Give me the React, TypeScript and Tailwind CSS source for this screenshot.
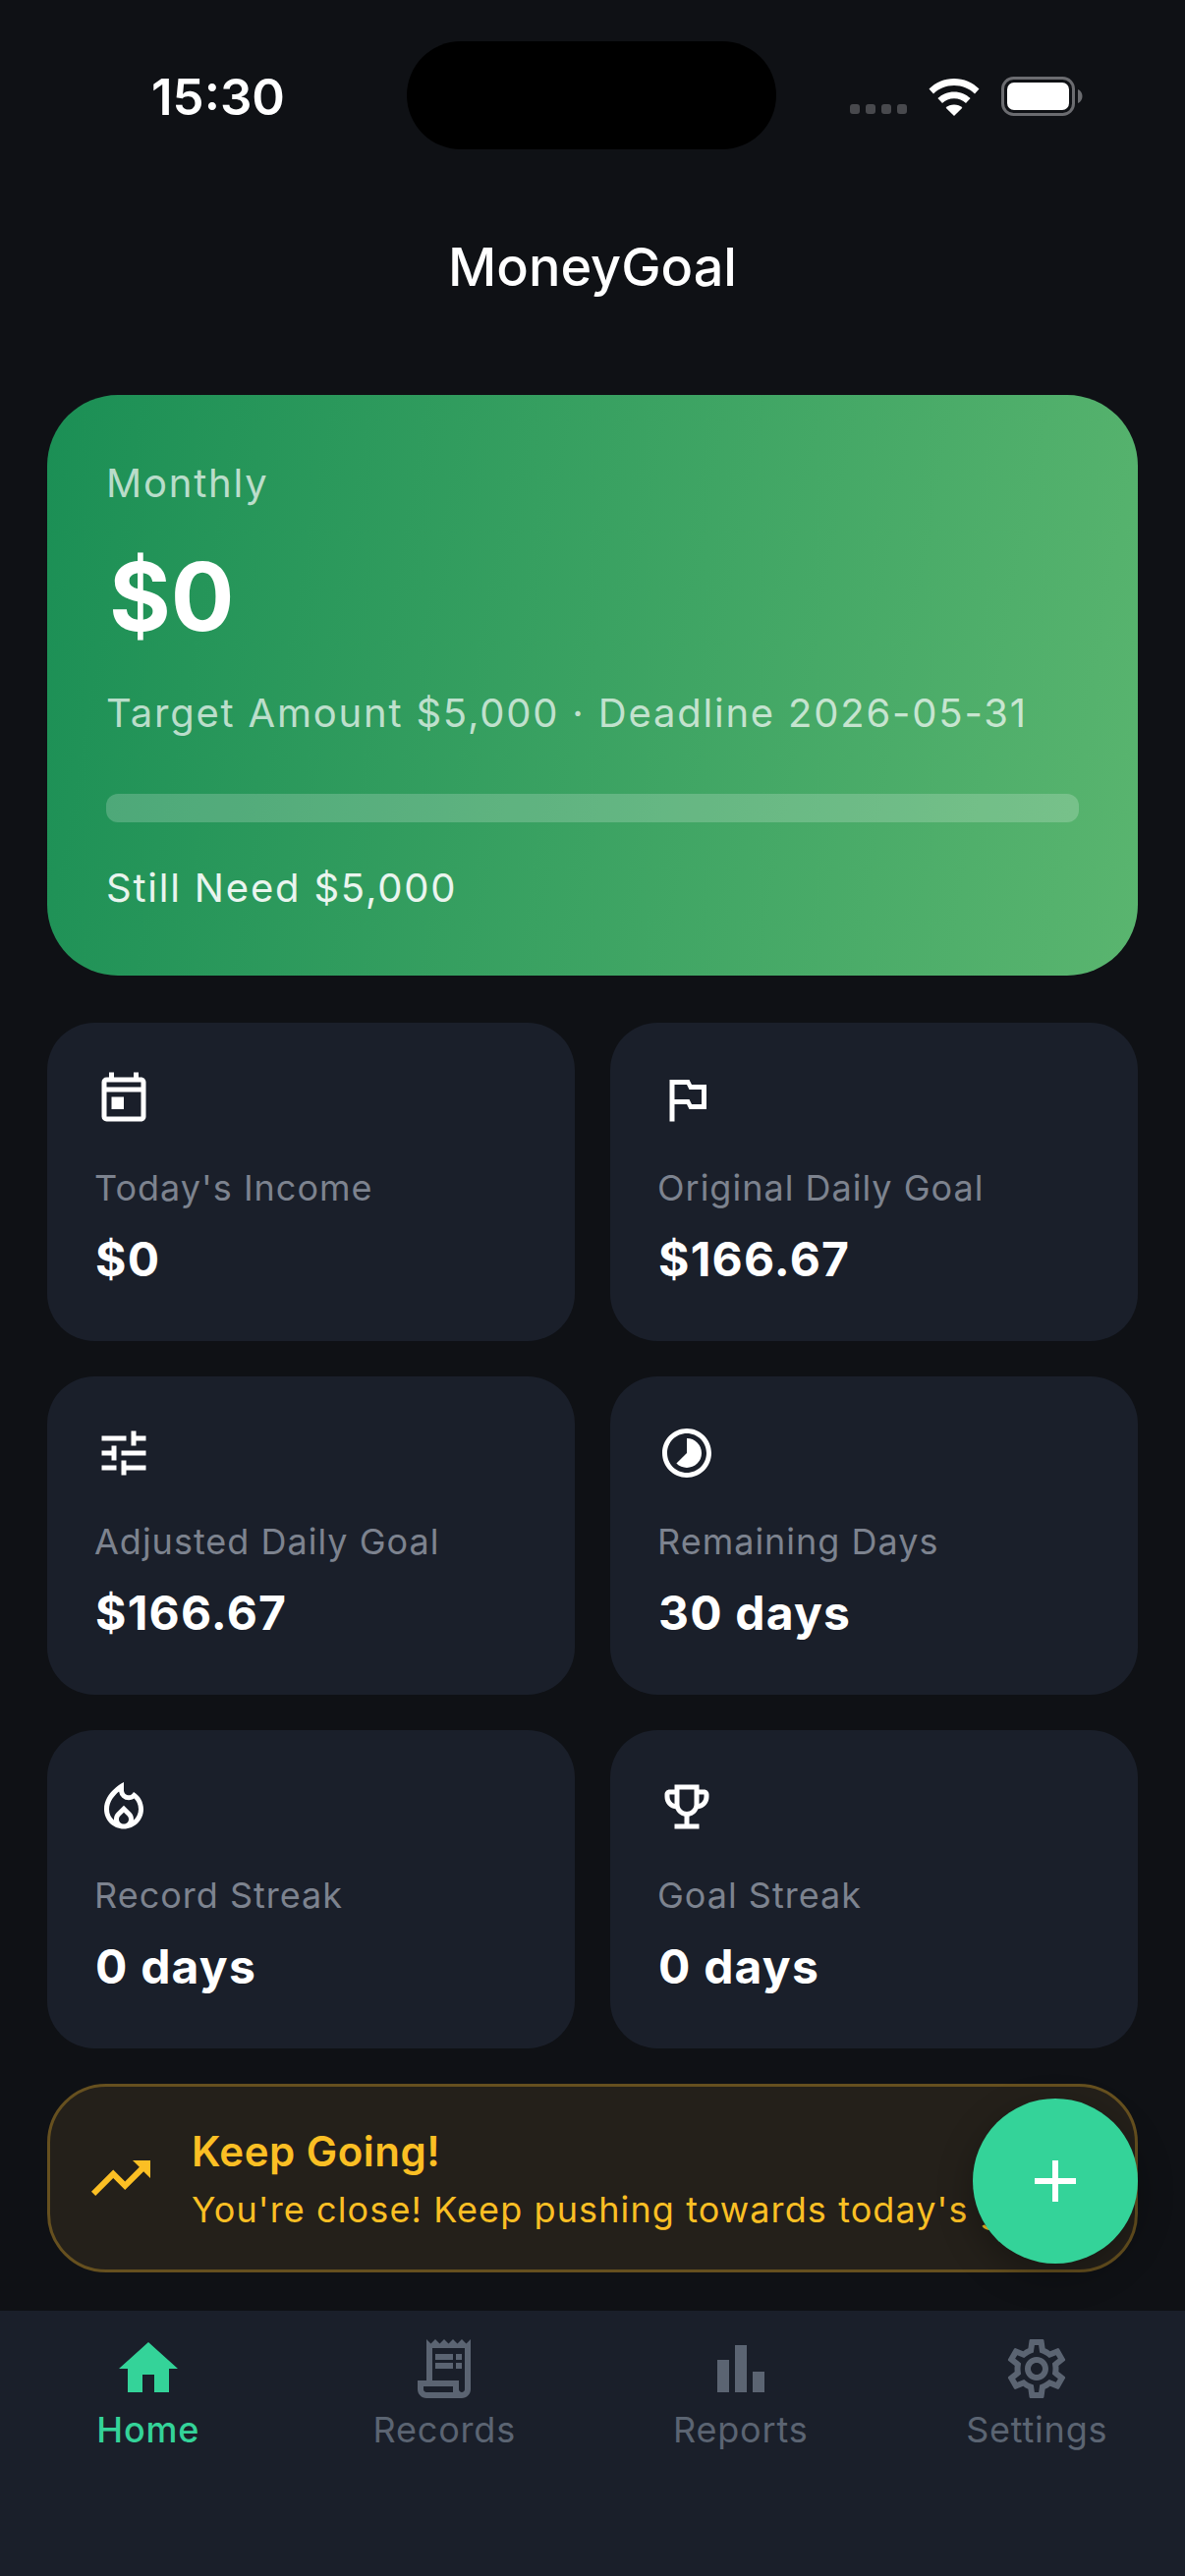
import type { ReactNode } from 'react';
import {
  MdAdd,
  MdBarChart,
  MdHome,
  MdOutlineEmojiEvents,
  MdOutlineLocalFireDepartment,
  MdOutlineReceiptLong,
  MdOutlineSettings,
  MdOutlineToday,
  MdOutlinedFlag,
  MdTimelapse,
  MdTrendingUp,
  MdTune,
} from 'react-icons/md';

const stats = [
  { label: "Today's Income", value: '$0', icon: MdOutlineToday },
  { label: 'Original Daily Goal', value: '$166.67', icon: MdOutlinedFlag },
  { label: 'Adjusted Daily Goal', value: '$166.67', icon: MdTune },
  { label: 'Remaining Days', value: '30 days', icon: MdTimelapse },
  { label: 'Record Streak', value: '0 days', icon: MdOutlineLocalFireDepartment },
  { label: 'Goal Streak', value: '0 days', icon: MdOutlineEmojiEvents },
];

const tabs = [
  { label: 'Home', icon: MdHome, active: true },
  { label: 'Records', icon: MdOutlineReceiptLong, active: false },
  { label: 'Reports', icon: MdBarChart, active: false },
  { label: 'Settings', icon: MdOutlineSettings, active: false },
];

function StatusBar() {
  return (
    <div className="flex h-[152px] shrink-0 items-start pt-[42px]">
      <div className="flex h-[110px] w-[414px] items-start justify-center pl-[30px] pt-[26px]">
        <span className="text-[51px] leading-[62px] font-semibold text-white">15:30</span>
      </div>
      <div className="h-[110px] w-[376px] rounded-[55px] bg-black" />
      <div className="ml-[75px] flex items-end pt-[36px]">
        <div className="mb-[2px] flex gap-[6px]">
          <div className="h-[10px] w-[10px] rounded-[3px] bg-[#48494d]" />
          <div className="h-[10px] w-[10px] rounded-[3px] bg-[#48494d]" />
          <div className="h-[10px] w-[10px] rounded-[3px] bg-[#48494d]" />
          <div className="h-[10px] w-[10px] rounded-[3px] bg-[#48494d]" />
        </div>
        <svg className="ml-[22px]" width="52" height="38" viewBox="0 0 52 38" fill="#ffffff">
          <path d="M26 0C16 0 7.2 4 0.5 10.5L5 15.5C10.5 10 17.8 7 26 7s15.5 3 21 8.500L51.500 10.500C44.800 4 36 0 26 0z" />
          <path d="M26 13.500c-6.500 0-12.300 2.500-16.600 6.600L14 25c3.200-3 7.300-4.800 12-4.800s8.800 1.800 12 4.800l4.600-4.900C38.300 16 32.500 13.500 26 13.500z" />
          <path d="M26 26.500c-3.300 0-6.200 1.200-8.400 3.200L26 38l8.400-8.300c-2.200-2-5.100-3.200-8.400-3.200z" />
        </svg>
        <svg className="ml-[22px]" width="83" height="40" viewBox="0 0 83 40">
          <rect x="1.500" y="1.500" width="72" height="37" rx="11" fill="none" stroke="#6b6c70" strokeWidth="3" />
          <rect x="6" y="6" width="63" height="28" rx="7" fill="#ffffff" />
          <path d="M78 13c2.800 1 4.500 3.800 4.500 7s-1.700 6-4.500 7z" fill="#6b6c70" />
        </svg>
      </div>
    </div>
  );
}

function HeroCard() {
  return (
    <section className="flex h-[591px] flex-col rounded-[72px] bg-[linear-gradient(100deg,#1b8f55,#5ab56f)] px-[60px] pt-[66px]">
      <p className="text-[40px] leading-[48px] tracking-[1.8px] text-white/70">Monthly</p>
      <p className="mt-[33px] pl-[3px] text-[96px] leading-[116px] font-bold text-white">$0</p>
      <p className="mt-[37px] text-[40px] leading-[48px] tracking-[1.8px] text-white/70">
        Target Amount $5,000 · Deadline 2026-05-31
      </p>
      <div className="mt-[58px] h-[29px] w-full rounded-[12px] bg-white/20" />
      <p className="mt-[43px] text-[40px] leading-[48px] tracking-[1.8px] text-white/90">Still Need $5,000</p>
    </section>
  );
}

function StatCard({ label, value, icon }: { label: string; value: string; icon: typeof MdHome }) {
  const Icon = icon;
  return (
    <div className="flex h-[324px] flex-col rounded-[48px] bg-[#1a1f2a] p-[48px]">
      <Icon size={60} color="#ffffff" />
      <p className="mt-[38px] text-[36px] leading-[44px] tracking-[1px] text-[#7d838f]">{label}</p>
      <p className="mt-[20px] pl-[1px] text-[48px] leading-[62px] font-bold tracking-[1.2px] text-white">{value}</p>
    </div>
  );
}

function Banner({ children }: { children: ReactNode }) {
  return (
    <div className="flex h-[192px] items-center gap-[36px] rounded-[60px] border-[3px] border-[#66501f] bg-[#24201a] px-[36px]">
      <MdTrendingUp size={72} color="#fbbf24" className="shrink-0" />
      {children}
    </div>
  );
}

export default function App() {
  return (
    <div className="relative flex h-[2622px] w-[1206px] flex-col overflow-hidden bg-[#0f1115] font-['Inter','Noto_Sans',sans-serif]">
      <StatusBar />
      <header className="flex h-[250px] shrink-0 justify-center pt-[90px]">
        <h1 className="text-[54px] leading-[60px] font-medium text-white">MoneyGoal</h1>
      </header>

      <main className="flex flex-1 flex-col px-[48px]">
        <HeroCard />
        <div className="mt-[48px] grid grid-cols-2 gap-[36px]">
          {stats.map((stat) => (
            <StatCard key={stat.label} {...stat} />
          ))}
        </div>
        <div className="mt-[36px]">
          <Banner>
            <div className="min-w-0">
              <p className="text-[42px] leading-[52px] font-semibold tracking-[0.5px] text-[#fbbf24]">Keep Going!</p>
              <p className="mt-[11px] whitespace-nowrap text-[36px] leading-[44px] tracking-[1.1px] text-[#fbbf24]">
                You're close! Keep pushing towards today's goal!
              </p>
            </div>
          </Banner>
        </div>
      </main>

      <nav className="grid h-[270px] shrink-0 grid-cols-4 bg-[#1a1f2a] pt-[23px]">
        {tabs.map((tab) => {
          const Icon = tab.icon;
          return (
            <div key={tab.label} className="flex flex-col items-center">
              <Icon size={72} color={tab.active ? '#34d399' : '#5b6472'} />
              <span
                className={`mt-[4px] text-[36px] leading-[44px] tracking-[0.8px] ${tab.active ? 'font-medium text-[#34d399]' : 'text-[#5b6472]'}`}
              >
                {tab.label}
              </span>
            </div>
          );
        })}
      </nav>

      <button className="absolute left-[990px] top-[2136px] flex h-[168px] w-[168px] items-center justify-center rounded-full bg-[#34d399] shadow-[0_12px_36px_rgba(0,0,0,0.3)]">
        <MdAdd size={72} color="#ffffff" />
      </button>
    </div>
  );
}
